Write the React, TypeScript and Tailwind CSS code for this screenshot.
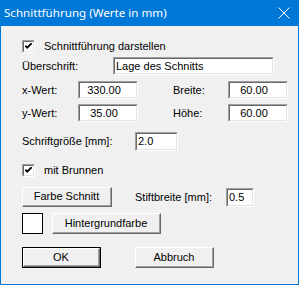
import React from "react";

const ui = { fontFamily: '"Liberation Sans", Arial, sans-serif' };

function Check() {
  return (
    <div className="w-[13px] h-[13px] border-t border-l border-[#a0a0a0] border-r-white border-b-white border-r border-b shrink-0">
      <div className="w-full h-full border-t border-l border-[#696969] border-r border-b border-r-[#e3e3e3] border-b-[#e3e3e3] bg-white flex items-center justify-center">
        <svg width="7" height="7" viewBox="0 0 7 7">
          <path d="M0.3 2.6 L2.2 4.6 L6.7 0.2" stroke="#000" strokeWidth="1.9" fill="none" />
        </svg>
      </div>
    </div>
  );
}

function Field({ value, className = "", align = "left" }: { value: string; className?: string; align?: "left" | "center" }) {
  return (
    <div className={`h-[18px] border-t border-l border-[#a0a0a0] border-r border-b border-r-white border-b-white shrink-0 ${className}`}>
      <div
        className={`w-full h-full border-t border-l border-[#696969] border-r border-b border-r-[#e3e3e3] border-b-[#e3e3e3] bg-white flex items-center text-[11px] text-black leading-none ${
          align === "center" ? "justify-center pr-[8px]" : "pl-[1px]"
        }`}
      >
        {value}
      </div>
    </div>
  );
}

function Button({ label, className = "", primary = false }: { label: string; className?: string; primary?: boolean }) {
  const face = (
    <div className="w-full h-full border-t border-l border-white border-r border-b border-r-[#696969] border-b-[#696969]">
      <div className="w-full h-full border-r border-b border-r-[#a0a0a0] border-b-[#a0a0a0] bg-[#f0f0f0] flex items-center justify-center text-[11px] text-black leading-none">
        {label}
      </div>
    </div>
  );
  return (
    <div className={`h-[20px] shrink-0 ${primary ? "border border-black" : ""} ${className}`}>{face}</div>
  );
}

export default function App() {
  return (
    <div className="w-[299px] h-[285px] bg-[#0078d7] flex flex-col" style={ui}>
      <div className="h-[26px] flex items-center justify-between pl-[4px] pr-[9px] text-white">
        <span className="text-[11.6px]" style={{ fontFamily: '"Noto Sans", sans-serif' }}>
          Schnittführung (Werte in mm)
        </span>
        <svg width="12" height="12" viewBox="0 0 12 12">
          <path d="M0.5 0.5 L11.5 11.5 M11.5 0.5 L0.5 11.5" stroke="#fff" strokeWidth="1" />
        </svg>
      </div>
      <div className="flex-1 mx-[1px] mb-[1px] bg-[#f0f0f0] pl-[21px] pt-[14px] text-[11px] text-black leading-none">
        <div className="flex items-center gap-[9px] h-[13px]">
          <Check />
          <span>Schnittführung darstellen</span>
        </div>

        <div className="flex items-center mt-[4px] h-[18px]">
          <span className="w-[91px]">Überschrift:</span>
          <Field value="Lage des Schnitts" className="w-[161px]" />
        </div>

        <div className="flex items-center mt-[6px] h-[18px]">
          <span className="w-[56px]">x-Wert:</span>
          <Field value="330.00" className="w-[60px]" align="center" />
          <span className="w-[55px] ml-[35px]">Breite:</span>
          <Field value="60.00" className="w-[60px]" align="center" />
        </div>

        <div className="flex items-center mt-[5px] h-[18px]">
          <span className="w-[56px]">y-Wert:</span>
          <Field value="35.00" className="w-[60px]" align="center" />
          <span className="w-[55px] ml-[35px]">Höhe:</span>
          <Field value="60.00" className="w-[60px]" align="center" />
        </div>

        <div className="flex items-center mt-[10px] h-[19px]">
          <span className="w-[113px]">Schriftgröße [mm]:</span>
          <Field value="2.0" className="w-[43px] h-[19px]" />
        </div>

        <div className="flex items-center gap-[9px] h-[13px] mt-[13px]">
          <Check />
          <span>mit Brunnen</span>
        </div>

        <div className="flex items-center mt-[10px] h-[20px]">
          <Button label="Farbe Schnitt" className="w-[90px]" />
          <span className="ml-[23px] w-[91px]">Stiftbreite [mm]:</span>
          <Field value="0.5" className="w-[28px] h-[19px]" />
        </div>

        <div className="flex items-center mt-[6px] h-[21px]">
          <div className="w-[21px] h-[21px] border border-black bg-white" />
          <Button label="Hintergrundfarbe" className="w-[109px] ml-[9px] h-[21px]" />
        </div>

        <div className="flex items-center mt-[13px] h-[21px]">
          <Button label="OK" className="w-[79px] h-[21px]" primary />
          <Button label="Abbruch" className="w-[79px] h-[21px] ml-[34px]" />
        </div>
      </div>
    </div>
  );
}
